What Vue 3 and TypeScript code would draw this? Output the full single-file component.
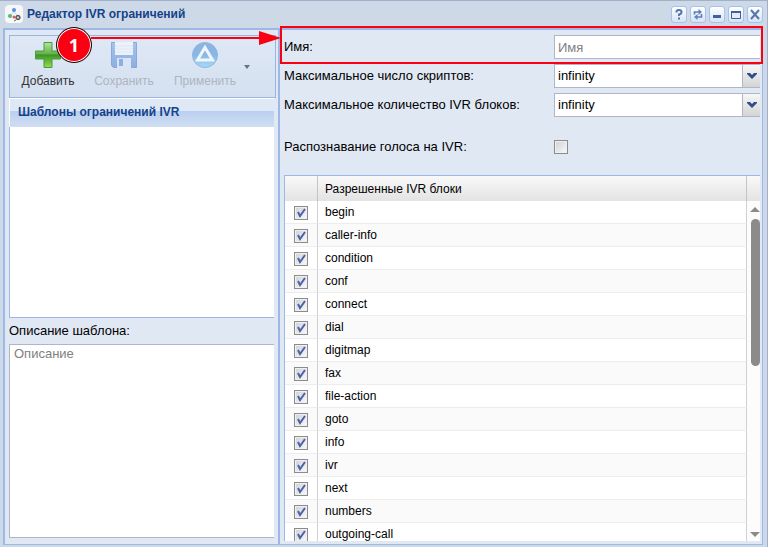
<script setup lang="ts">
import { ref } from 'vue'

interface Block {
  name: string
  allowed: boolean
}

const templateName = ref('')
const description = ref('')
const maxScripts = ref('infinity')
const maxBlocks = ref('infinity')
const speech = ref(false)
const blocks = ref<Block[]>(
  [
    'begin', 'caller-info', 'condition', 'conf', 'connect', 'dial', 'digitmap', 'fax',
    'file-action', 'goto', 'info', 'ivr', 'next', 'numbers', 'outgoing-call',
  ].map((name) => ({ name, allowed: true })),
)
</script>

<template>
  <div class="window">
    <header class="titlebar">
      <svg class="app-icon" viewBox="0 0 18 18" aria-hidden="true">
        <rect width="18" height="18" rx="4" fill="#f6f7f8" />
        <path d="M9 6 5 12M9 6l4 6" stroke="#c9d3e2" fill="none" />
        <circle cx="9" cy="5" r="2" fill="#5b8def" />
        <circle cx="5" cy="11" r="2" fill="#4fbf62" />
        <circle cx="9" cy="12" r="1.5" fill="#e0566c" />
        <circle cx="13" cy="12.500" r="2.200" fill="#777" stroke="#555" />
        <circle cx="13" cy="12.500" r="1" fill="#ddd" />
        <path d="m11 15-2 1" stroke="#666" />
      </svg>
      <h1>Редактор IVR ограничений</h1>
      <div class="tools">
        <button type="button" aria-label="Справка">
          <svg viewBox="0 0 14 15"><path d="M4.500 5.500V4.500Q4.500 3 7 3t2.500 2T7 7.500V9M7 10.500v2" fill="none" stroke="#5673ad" stroke-width="2" /></svg>
        </button>
        <button type="button" aria-label="Обновить">
          <svg viewBox="0 0 14 15"><path d="M3.500 7.500V5H8M10.500 7v3H6" fill="none" stroke="#5f80ba" stroke-width="1.700" /><path d="m7.500 2 3.500 3-3.500 3zM6.500 7 3 10l3.500 3z" fill="#5f80ba" /></svg>
        </button>
        <button type="button" aria-label="Свернуть">
          <svg viewBox="0 0 14 15"><path d="M3 8h8v3H3z" fill="#435f9e" /></svg>
        </button>
        <button type="button" aria-label="Развернуть">
          <svg viewBox="0 0 14 15"><path d="M2.500 4.500h9v7h-9z" fill="#e4ecf8" stroke="#435f9e" /><path d="M2 4h10v2H2z" fill="#435f9e" /></svg>
        </button>
        <button type="button" aria-label="Закрыть">
          <svg viewBox="0 0 14 15"><path d="m3 3 8 9m0-9-8 9" stroke="#5673ad" stroke-width="2" /></svg>
        </button>
      </div>
    </header>

    <div class="body">
      <section class="side">
        <div class="toolbar">
          <button type="button" class="action">
            <svg viewBox="0 0 28 28" aria-hidden="true">
              <defs><linearGradient id="plus" x2="0" y2="1"><stop stop-color="#b9e3a0" /><stop offset=".45" stop-color="#62b348" /><stop offset=".5" stop-color="#3d9428" /><stop offset="1" stop-color="#8fe04c" /></linearGradient></defs>
              <path d="M10 1.500h8V10h8.500v8H18v8.500h-8V18H1.500v-8H10z" fill="url(#plus)" stroke="#4a9a3c" />
            </svg>
            Добавить
          </button>
          <button type="button" class="action" disabled>
            <svg viewBox="0 0 28 28" aria-hidden="true">
              <defs><linearGradient id="disk" x2="0" y2="1"><stop stop-color="#a5c3ec" /><stop offset="1" stop-color="#8caee2" /></linearGradient></defs>
              <path d="M1.500 1.500h25v25h-23l-2-2z" fill="url(#disk)" stroke="#86a8dc" />
              <path d="M5 1h18v13H5z" fill="#edf2fa" /><path d="M5 5h18M5 8h18M5 11h18" stroke="#dce6f4" />
              <path d="M7 17h14v10H7z" fill="#d9e4f5" /><path d="M9 18h4v7H9z" fill="#8daee2" />
            </svg>
            Сохранить
          </button>
          <button type="button" class="action apply" disabled>
            <svg viewBox="0 0 28 28" aria-hidden="true">
              <defs><linearGradient id="apply" x2="0" y2="1"><stop stop-color="#8eb2df" /><stop offset=".5" stop-color="#89b7e5" /><stop offset="1" stop-color="#a4dcf7" /></linearGradient></defs>
              <circle cx="14" cy="14" r="12.500" fill="url(#apply)" stroke="#8fb4de" />
              <path d="M14 6.500 21.500 19h-15z" fill="none" stroke="#f0f6fd" stroke-width="3" />
            </svg>
            Применить
          </button>
          <span class="caret" />
        </div>
        <h2>Шаблоны ограничений IVR</h2>
        <div class="templates" />
        <label class="desc-label" for="description">Описание шаблона:</label>
        <textarea id="description" v-model="description" placeholder="Описание" />
      </section>

      <section class="main">
        <div class="form">
          <label for="name">Имя:</label>
          <input id="name" v-model="templateName" class="field" type="text" placeholder="Имя" />
          <label for="scripts">Максимальное число скриптов:</label>
          <div class="combo">
            <select id="scripts" v-model="maxScripts" class="field"><option>infinity</option></select>
            <span class="trigger"><svg viewBox="0 0 10 8"><path d="M0 1h3l2 2 2-2h3v1L5 7 0 2z" fill="#2f4b8c" /></svg></span>
          </div>
          <label for="max-blocks">Максимальное количество IVR блоков:</label>
          <div class="combo">
            <select id="max-blocks" v-model="maxBlocks" class="field"><option>infinity</option></select>
            <span class="trigger"><svg viewBox="0 0 10 8"><path d="M0 1h3l2 2 2-2h3v1L5 7 0 2z" fill="#2f4b8c" /></svg></span>
          </div>
        </div>
        <div class="form speech">
          <label for="speech">Распознавание голоса на IVR:</label>
          <span class="check"><input id="speech" v-model="speech" type="checkbox" /><svg viewBox="0 0 14 14"><path d="m4 6 2 4 5-7" /></svg></span>
        </div>

        <div class="grid">
          <div class="rows">
            <table>
              <thead>
                <tr><th class="pick" /><th>Разрешенные IVR блоки</th></tr>
              </thead>
              <tbody>
                <tr v-for="(block, i) in blocks" :key="block.name">
                  <td class="pick">
                    <span class="check"><input :id="`block-${i}`" v-model="block.allowed" type="checkbox" /><svg viewBox="0 0 14 14"><path d="m4 6 2 4 5-7" /></svg></span>
                  </td>
                  <td><label :for="`block-${i}`">{{ block.name }}</label></td>
                </tr>
              </tbody>
            </table>
          </div>
          <div class="scroll" aria-hidden="true">
            <div class="corner" />
            <span class="up" />
            <div class="track"><div class="thumb" /></div>
            <span class="down" />
          </div>
        </div>
      </section>
    </div>

    <div class="highlight" />
    <svg class="arrow" viewBox="0 0 190 14" aria-hidden="true">
      <path d="M0 7h170" stroke="#fb0012" stroke-width="2" /><path d="m168 0 22 7-22 7z" fill="#fb0012" />
    </svg>
    <div class="step">1</div>
  </div>
</template>

<style>
body {
  margin: 0;
}
</style>

<style scoped>
* {
  box-sizing: border-box;
}
.window {
  position: relative;
  display: flex;
  flex-direction: column;
  height: 100vh;
  padding: 0 4px 2px 3px;
  border-top: 1px solid #a2b1cb;
  border-right: 1px solid #a2aecb;
  background: #ced9e7;
  color: #000;
  font: 13px/16px "Liberation Sans", Arial, sans-serif;
}
.titlebar {
  display: flex;
  flex: none;
  align-items: center;
  height: 27px;
  padding: 0 0 1px 2px;
}
.app-icon {
  width: 18px;
  height: 18px;
}
h1,
h2 {
  margin: 0;
  color: #15428b;
  font-size: 12px;
  line-height: 16px;
}
h1 {
  flex: 1;
  padding-left: 4px;
}
.tools {
  display: flex;
  gap: 3px;
}
.tools button {
  display: flex;
  width: 16px;
  height: 17px;
  padding: 0;
  border: 1px solid #a6c1ea;
  border-radius: 3px;
  background: linear-gradient(#fff, #d5e4f7);
}
.tools svg {
  width: 14px;
  height: 15px;
}
.body {
  display: flex;
  flex: 1;
  min-height: 0;
  border: 1px solid #9db8e6;
  border-width: 2px 1px 1px 2px;
  background: #e0e8f4;
}
.side {
  display: flex;
  flex: none;
  flex-direction: column;
  width: 273px;
  padding: 5px 4px 6px 4px;
}
.toolbar {
  display: flex;
  flex: none;
  align-items: flex-start;
  gap: 2px;
  height: 63px;
  margin-right: -2px;
  padding: 5px 4px 0 6px;
  border: 1px solid #9bb5df;
  background: linear-gradient(#dfe8f5, #d4e0f0);
}
.action {
  display: flex;
  flex-direction: column;
  align-items: center;
  gap: 4px;
  width: 64px;
  padding: 0;
  border: 0;
  background: none;
  color: #333;
  font: 12px/16px "Liberation Sans", Arial, sans-serif;
}
.action:disabled {
  width: 84px;
  color: #aeb5be;
}
.action.apply {
  width: 74px;
}
.caret {
  margin-top: 24px;
  border: 3px solid transparent;
  border-top: 4px solid #69717d;
  border-bottom: 0;
}
.action svg {
  width: 28px;
  height: 28px;
}
h2 {
  flex: none;
  height: 29px;
  padding: 5px 8px;
  border: 1px solid #fff;
  border-width: 1px 0 0 1px;
  background: linear-gradient(#dfe9f6 0 42%, #b9cff0 42%, #d0def2);
}
.templates {
  flex: 191;
  border: 1px solid #9db8e6;
  border-width: 0 0 1px 1px;
  background: #fff;
}
.desc-label {
  margin: 5px 0;
}
textarea {
  flex: 191;
  width: 100%;
  min-height: 0;
  padding: 1px 4px;
  border: 1px solid #b0b5c8;
  border-right: 0;
  border-radius: 0;
  outline: 0;
  background: #fff;
  font: inherit;
  resize: none;
}
::placeholder {
  color: #808080;
  opacity: 1;
}
.main {
  display: flex;
  flex: 1;
  flex-direction: column;
  min-width: 0;
  padding: 5px 2px 3px 4px;
  border-left: 2px solid #9db8e6;
}
.form {
  display: grid;
  grid-template-columns: 270px 1fr;
  row-gap: 5px;
  align-items: center;
}
.speech {
  margin: 22px 0 20px;
}
.field {
  width: 100%;
  height: 24px;
  padding: 0 3px;
  border: 1px solid #b0b5c8;
  border-right: 0;
  border-radius: 0;
  outline: 0;
  appearance: none;
  background: #fff;
  color: #000;
  font: inherit;
}
.combo {
  display: flex;
  height: 24px;
}
.combo .field {
  flex: 1;
  min-width: 0;
}
.trigger {
  display: flex;
  flex: none;
  align-items: center;
  justify-content: center;
  width: 18px;
  border: 1px solid #b0b5c8;
  border-right: 0;
  background: linear-gradient(#f7f7f7, #d4d4d4);
  pointer-events: none;
}
.trigger svg {
  width: 10px;
  height: 8px;
}
.check {
  display: grid;
  width: 14px;
  height: 14px;
}
.check input,
.check svg {
  grid-area: 1 / 1;
  width: 14px;
  height: 14px;
  margin: 0;
}
.check input {
  border: 1px solid #8c8c8c;
  appearance: none;
  background: linear-gradient(135deg, #cdd1d8, #fafafa);
  box-shadow: inset 0 0 0 1px #f0f0f0;
}
.check svg {
  visibility: hidden;
  fill: none;
  stroke: #4c62a5;
  stroke-width: 2px;
  pointer-events: none;
}
.check input:checked + svg {
  visibility: visible;
}
.grid {
  display: flex;
  flex: 1;
  min-height: 0;
  border: 1px solid #9db8e6;
  border-width: 1px 0 0 1px;
  background: #fff;
}
.rows {
  flex: 1;
  overflow: hidden;
}
table {
  width: 100%;
  border-collapse: separate;
  border-spacing: 0;
  table-layout: fixed;
  font-size: 12px;
}
th {
  height: 25px;
  padding: 0 7px;
  border-right: 1px solid #c5c5c5;
  background: linear-gradient(#f9f9f9, #e4e3e4);
  font-weight: normal;
  text-align: left;
}
td {
  height: 23px;
  padding: 0 7px;
  border-right: 1px solid #d0d0d0;
  border-bottom: 1px solid #ededed;
  line-height: 16px;
}
.pick {
  width: 33px;
}
td.pick {
  padding: 2px 0 0 9px;
}
tbody tr:nth-child(even) {
  background: #fafafa;
}
.scroll {
  display: flex;
  flex: none;
  flex-direction: column;
  align-items: flex-end;
  width: 13px;
  background: #fcfcfc;
}
.corner {
  width: 100%;
  height: 25px;
  background: linear-gradient(#f9f9f9, #e4e3e4);
}
.up,
.down {
  border: 5px solid transparent;
}
.up {
  margin: 6px 0 7px;
  border-top: 0;
  border-bottom-color: #8b8b8b;
}
.down {
  margin: 7px 0 4px;
  border-bottom: 0;
  border-top-color: #8b8b8b;
}
.track {
  flex: 1;
  width: 9px;
}
.thumb {
  height: 48%;
  border-radius: 5px;
  background: #8b8b8b;
}
.highlight {
  position: absolute;
  top: 25px;
  right: 4px;
  left: 280px;
  height: 38px;
  border: 2px solid #fb0012;
  pointer-events: none;
}
.arrow {
  position: absolute;
  top: 30px;
  left: 91px;
  width: 190px;
  height: 14px;
  pointer-events: none;
}
.step {
  position: absolute;
  top: 26px;
  left: 56px;
  width: 36px;
  height: 36px;
  border: 1px solid #111;
  border-radius: 50%;
  background: #fb0012;
  box-shadow: inset 0 0 0 1px #fff;
  color: #fff;
  font: bold 18px/34px "Open Sans", sans-serif;
  text-align: center;
}
</style>
